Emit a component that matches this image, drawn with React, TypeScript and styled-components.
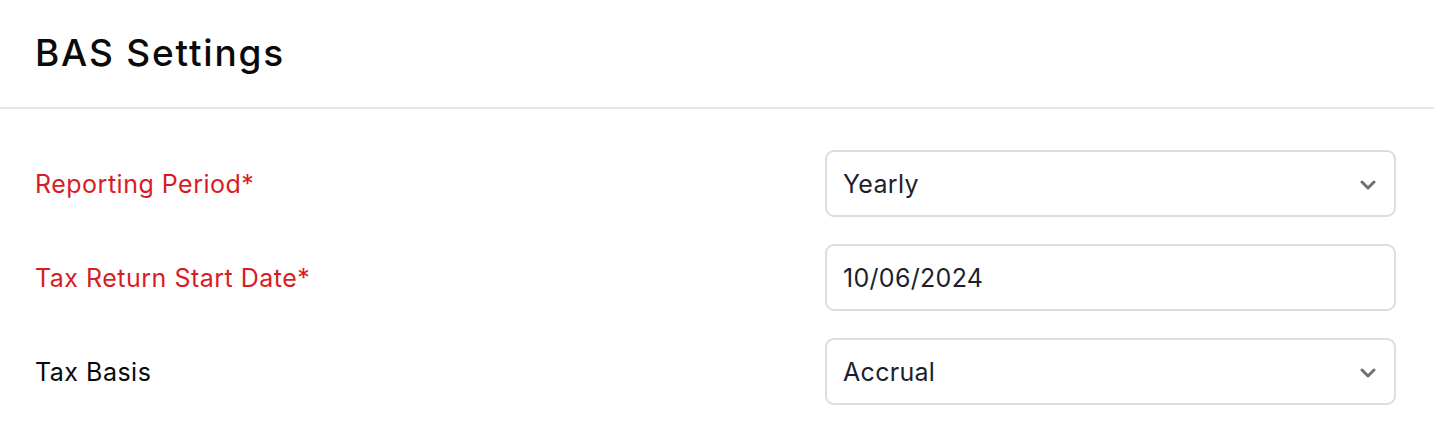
import styled, { createGlobalStyle } from "styled-components";

const GlobalStyle = createGlobalStyle`
  body {
    margin: 0;
    background: #fff;
    font-family: Inter, "Liberation Sans", sans-serif;
  }
`;

const Page = styled.div`
  width: 1434px;
  background: #fff;
`;

const Header = styled.header`
  height: 109px;
  padding: 0 35px;
  display: flex;
  align-items: center;
  border-bottom: 2px solid #e4e3ee;
  box-sizing: border-box;
`;

const Title = styled.h1`
  margin: 0;
  margin-top: -2px;
  font-size: 37px;
  font-weight: 500;
  color: #0a0a0a;
  letter-spacing: 1.8px;
`;

const Form = styled.form`
  padding: 41px 38px 0 35px;
  display: grid;
  grid-template-columns: 1fr 571px;
  row-gap: 27px;
  align-items: center;
`;

const Label = styled.label<{ $required?: boolean }>`
  font-size: 25px;
  letter-spacing: 0.5px;
  color: ${(p) => (p.$required ? "#d91c24" : "#0a0a0a")};
`;

const Control = styled.div`
  position: relative;
  height: 67px;
  border: 2px solid #dcdbe6;
  border-radius: 9px;
  box-sizing: border-box;
  display: flex;
  align-items: center;
  padding: 0 16px;
  font-size: 25px;
  letter-spacing: 0.3px;
  color: #1c1f2e;
`;

const Chevron = styled.svg`
  position: absolute;
  right: 18px;
  top: 50%;
  margin-top: -4px;
`;

function ChevronDown() {
  return (
    <Chevron width="16" height="10" viewBox="0 0 16 10">
      <path
        d="M2 2 L8 8 L14 2"
        fill="none"
        stroke="#707074"
        strokeWidth="3"
        strokeLinecap="round"
        strokeLinejoin="round"
      />
    </Chevron>
  );
}

export default function App() {
  return (
    <Page>
      <GlobalStyle />
      <Header>
        <Title>BAS Settings</Title>
      </Header>
      <Form>
        <Label $required>Reporting Period*</Label>
        <Control>
          Yearly
          <ChevronDown />
        </Control>

        <Label $required>Tax Return Start Date*</Label>
        <Control>10/06/2024</Control>

        <Label>Tax Basis</Label>
        <Control>
          Accrual
          <ChevronDown />
        </Control>
      </Form>
    </Page>
  );
}
